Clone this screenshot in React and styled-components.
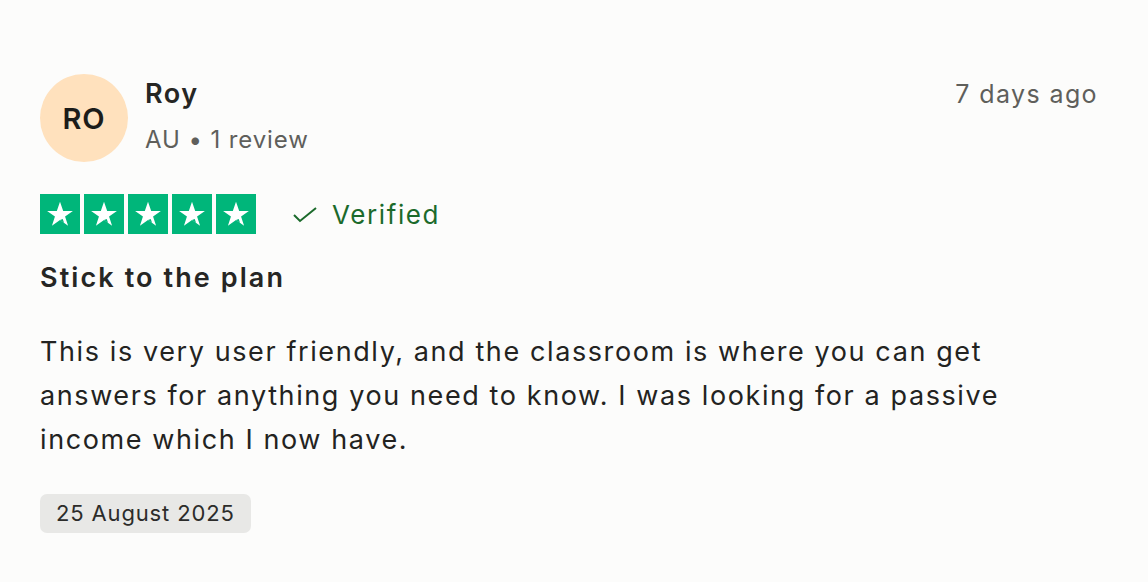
import React from 'react';
import styled, { createGlobalStyle } from 'styled-components';

const GlobalStyle = createGlobalStyle`
  body {
    margin: 0;
    background-color: #fcfcfb;
    font-family: Inter, "Noto Sans", sans-serif;
    color: #262624;
  }
`

const Card = styled.div`
  width: 1148px;
  height: 582px;
  box-sizing: border-box;
  padding: 74px 50px 0px 40px;
  background-color: #fcfcfb;
`

const Header = styled.div`
  display: flex;
  align-items: flex-start;
`

const Avatar = styled.div`
  width: 88px;
  height: 88px;
  border-radius: 50%;
  background-color: #ffe1bd;
  display: flex;
  align-items: center;
  justify-content: center;
  font-size: 29px;
  font-weight: 600;
  color: #1c1c1a;
  letter-spacing: 1px;
`

const Who = styled.div`
  display: flex;
  flex-direction: column;
  margin-left: 17px;
  flex: 1;
`

const Name = styled.div`
  font-size: 27px;
  font-weight: 600;
  line-height: 40px;
  letter-spacing: 1.5px;
`

const Meta = styled.div`
  font-size: 24px;
  color: #5f5f5b;
  line-height: 40px;
  margin-top: 6px;
  letter-spacing: 0.9px;
`

const Ago = styled.div`
  font-size: 25px;
  color: #5f5f5b;
  line-height: 40px;
  letter-spacing: 1.4px;
`

const RatingRow = styled.div`
  display: flex;
  align-items: center;
  margin-top: 32px;
`

const Stars = styled.div`
  display: flex;
  gap: 4px;
`

const StarBox = styled.div`
  width: 40px;
  height: 40px;
  background-color: #00b67a;
  display: flex;
  align-items: center;
  justify-content: center;
`

const Verified = styled.div`
  display: flex;
  align-items: center;
  margin-left: 36px;
  font-size: 26px;
  color: #1b6a2b;
  gap: 14px;
  letter-spacing: 1.6px;
`

const Title = styled.h2`
  margin: 24px 0px 0px;
  font-size: 27px;
  font-weight: 600;
  line-height: 40px;
  letter-spacing: 2.1px;
`

const Body = styled.p`
  margin: 32px 0px 0px;
  max-width: 1020px;
  font-size: 27px;
  line-height: 44px;
  letter-spacing: 1.6px;
  color: #232321;
`

const DateChip = styled.div`
  display: inline-block;
  margin-top: 32px;
  padding: 6px 16px;
  background-color: #e8e8e6;
  border-radius: 7px;
  font-size: 22px;
  line-height: 27px;
  letter-spacing: 0.85px;
  color: #2c2c2a;
`

const Star = () => (
  <svg width="30" height="30" viewBox="0 0 24 24">
    <path d="M12 2.2l2.55 7.3h7.75l-6.25 4.55 2.4 7.35L12 16.85 5.55 21.4l2.4-7.35L1.7 9.5h7.75z" fill="#fff"/>
    <path d="M14.2 16.05l1.05 3.2L12 16.85z" fill="#00b67a"/>
  </svg>
)

const Check = () => (
  <svg width="26" height="18" viewBox="0 0 26 18">
    <path d="M2 10l6 6L24 3" fill="none" stroke="#1b6a2b" strokeWidth="2"/>
  </svg>
)

const App = () => {
  return (
    <Card>
      <GlobalStyle/>
      <Header>
        <Avatar>RO</Avatar>
        <Who>
          <Name>Roy</Name>
          <Meta>AU • 1 review</Meta>
        </Who>
        <Ago>7 days ago</Ago>
      </Header>
      <RatingRow>
        <Stars>
          {[0, 1, 2, 3, 4].map(i => (
            <StarBox key={i}><Star/></StarBox>
          ))}
        </Stars>
        <Verified>
          <Check/>
          Verified
        </Verified>
      </RatingRow>
      <Title>Stick to the plan</Title>
      <Body>
        This is very user friendly, and the classroom is where you can get answers for anything you need to know. I was looking for a passive income which I now have.
      </Body>
      <DateChip>25 August 2025</DateChip>
    </Card>
  )
}

export default App
